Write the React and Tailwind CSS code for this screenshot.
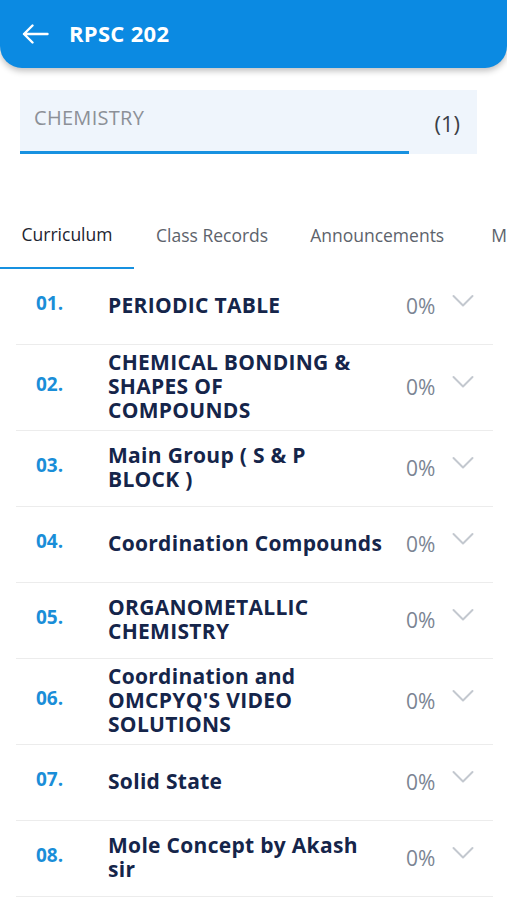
import React from 'react';

// line breaks follow the reference's wrapping
const chapters = [
  { no: '01.', title: 'PERIODIC TABLE' },
  { no: '02.', title: 'CHEMICAL BONDING &\nSHAPES OF\nCOMPOUNDS' },
  { no: '03.', title: 'Main Group ( S & P\nBLOCK )' },
  { no: '04.', title: 'Coordination Compounds' },
  { no: '05.', title: 'ORGANOMETALLIC\nCHEMISTRY' },
  { no: '06.', title: "Coordination and\nOMCPYQ'S VIDEO\nSOLUTIONS" },
  { no: '07.', title: 'Solid State' },
  { no: '08.', title: 'Mole Concept by Akash\nsir' },
];

function Chevron() {
  return (
    <svg width="22" height="14" viewBox="0 0 22 14" fill="none" className="mb-3">
      <path d="M1.5 2 L11 11.5 L20.5 2" stroke="#c3c8cf" strokeWidth="2" strokeLinecap="round" strokeLinejoin="round" />
    </svg>
  );
}

export default function App() {
  return (
    <div className="w-[507px] h-[900px] overflow-hidden bg-white font-['Open_Sans',sans-serif]">
      {/* Header */}
      <div className="h-[68px] bg-[#0b8ae2] rounded-b-[22px] shadow-[0_3px_6px_rgba(0,0,0,0.25)] flex items-center px-[22px]">
        <svg width="27" height="20" viewBox="0 0 27 20" fill="none">
          <path d="M25.5 10 H2 M10.5 1.5 L2 10 L10.5 18.5" stroke="white" strokeWidth="2.4" strokeLinecap="round" strokeLinejoin="round" />
        </svg>
        <span className="ml-[20px] text-white font-bold text-[22px] tracking-[0.3px] -mt-[2px]">RPSC 202</span>
      </div>

      {/* Subject selector */}
      <div className="mt-[22px] mx-[20px] w-[457px] h-[64px] bg-[#eff5fc] relative flex items-center justify-between pl-[14px] pr-[17px]">
        <span className="text-[20px] text-[#8c9097] tracking-[0.3px] -mt-[8px]">CHEMISTRY</span>
        <span className="text-[22px] text-[#3a3f47] mt-[2px]">(1)</span>
        <div className="absolute left-0 bottom-[0px] w-[389px] h-[3px] bg-[#1791e0]" />
      </div>

      {/* Tabs */}
      <div className="mt-[68px] flex items-end h-[47px] relative whitespace-nowrap text-[17.5px]">
        <div className="w-[134px] shrink-0 h-full flex items-center justify-center border-b-2 border-[#1791e0] text-[#1d2430] pb-[20px]">Curriculum</div>
        <div className="ml-[22px] h-full flex items-center text-[#5d636c] pb-[20px]">Class Records</div>
        <div className="ml-[42px] h-full flex items-center text-[#5d636c] pb-[20px]">Announcements</div>
        <div className="ml-[47px] h-full flex items-center text-[#5d636c] pb-[20px]">M</div>
      </div>

      {/* Chapter list */}
      <div className="pl-[16px] pr-[14px]">
        {chapters.map((c) => (
          <div key={c.no} className="min-h-[76px] flex items-center border-b border-[#ececec] py-[5px]">
            <span className="w-[92px] shrink-0 pl-[20px] text-[19px] font-bold text-[#1a8ed8] -mt-[6px]">{c.no}</span>
            <span className="w-[276px] shrink-0 pb-[3px] whitespace-pre-line text-[21px] leading-[24px] font-bold text-[#15254a] tracking-[0.3px]">{c.title}</span>
            <span className="ml-[22px] text-[21px] text-[#7b8593]">0%</span>
            <span className="ml-[17px]"><Chevron /></span>
          </div>
        ))}
      </div>
    </div>
  );
}
